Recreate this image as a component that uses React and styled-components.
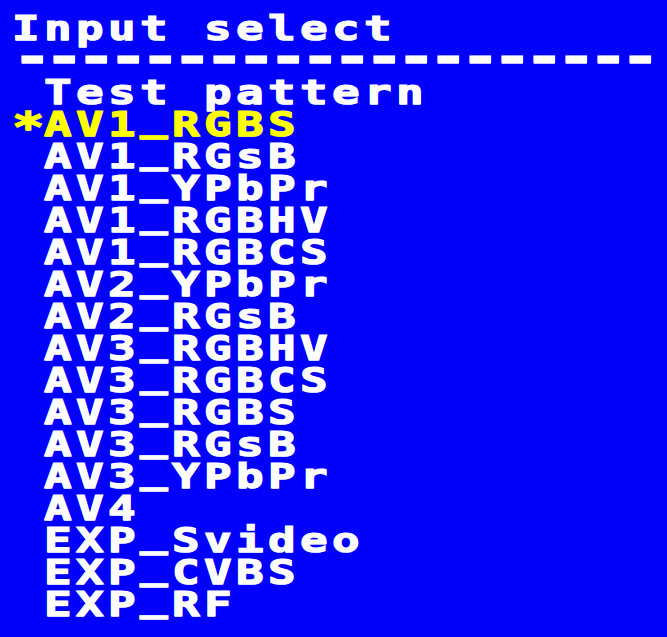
import React from "react";
import styled, { createGlobalStyle } from "styled-components";

const GlobalStyle = createGlobalStyle`
  html, body {
    margin: 0;
    padding: 0;
    background: #0000fc;
  }
  body {
    width: 667px;
    height: 637px;
    overflow: hidden;
  }
`;

const Screen = styled.div`
  width: 667px;
  height: 637px;
  box-sizing: border-box;
  padding: 12px 0 0 12px;
  background: #0000fc;
  overflow: hidden;
`;

/* OSD text grid: 32px cells both ways, glyphs stretched wide */
const Menu = styled.div`
  transform: scaleX(1.35);
  transform-origin: 0 0;
  font-family: "DejaVu Sans Mono", "Liberation Mono", monospace;
  font-weight: bold;
  font-size: 34px;
  letter-spacing: 3.23px;
`;

const Line = styled.div`
  height: 32px;
  line-height: 32px;
  white-space: pre;
  color: ${(p) => (p.$active ? "#ffff00" : "#ffffff")};
  -webkit-text-stroke: 1.2px currentColor;
  text-shadow: 0 1px 0 ${(p) => (p.$active ? "#c8c878" : "#a8a8ff")};
`;

const Divider = styled(Line)`
  font-size: 50px;
  line-height: 26px;
  letter-spacing: -6.4px;
  -webkit-text-stroke: 0.6px currentColor;
`;

/* selection star: its own cell, dropped to sit between cap top and baseline */
const Marker = styled.span`
  display: inline-block;
  width: 23.7px;
  line-height: 0;
  vertical-align: -0.12em;
  font-size: 40px;
  letter-spacing: 0;
`;

/* OSD underscore sits right under the baseline */
const Underscore = styled.span`
  line-height: 0;
  vertical-align: 0.14em;
`;

const title = "Input select";
const items = [
  "Test pattern",
  "AV1_RGBS",
  "AV1_RGsB",
  "AV1_YPbPr",
  "AV1_RGBHV",
  "AV1_RGBCS",
  "AV2_YPbPr",
  "AV2_RGsB",
  "AV3_RGBHV",
  "AV3_RGBCS",
  "AV3_RGBS",
  "AV3_RGsB",
  "AV3_YPbPr",
  "AV4",
  "EXP_Svideo",
  "EXP_CVBS",
  "EXP_RF",
];
const selected = "AV1_RGBS";

function Label({ text }) {
  const parts = text.split("_");
  return parts.map((part, i) => (
    <React.Fragment key={i}>
      {i > 0 && <Underscore>_</Underscore>}
      {part}
    </React.Fragment>
  ));
}

export default function App() {
  return (
    <>
      <GlobalStyle />
      <Screen>
        <Menu>
          <Line>{title}</Line>
          <Divider>{"-".repeat(20)}</Divider>
          {items.map((name) => (
            <Line key={name} $active={name === selected}>
              <Marker>{name === selected ? "*" : " "}</Marker>
              <Label text={name} />
            </Line>
          ))}
        </Menu>
      </Screen>
    </>
  );
}
